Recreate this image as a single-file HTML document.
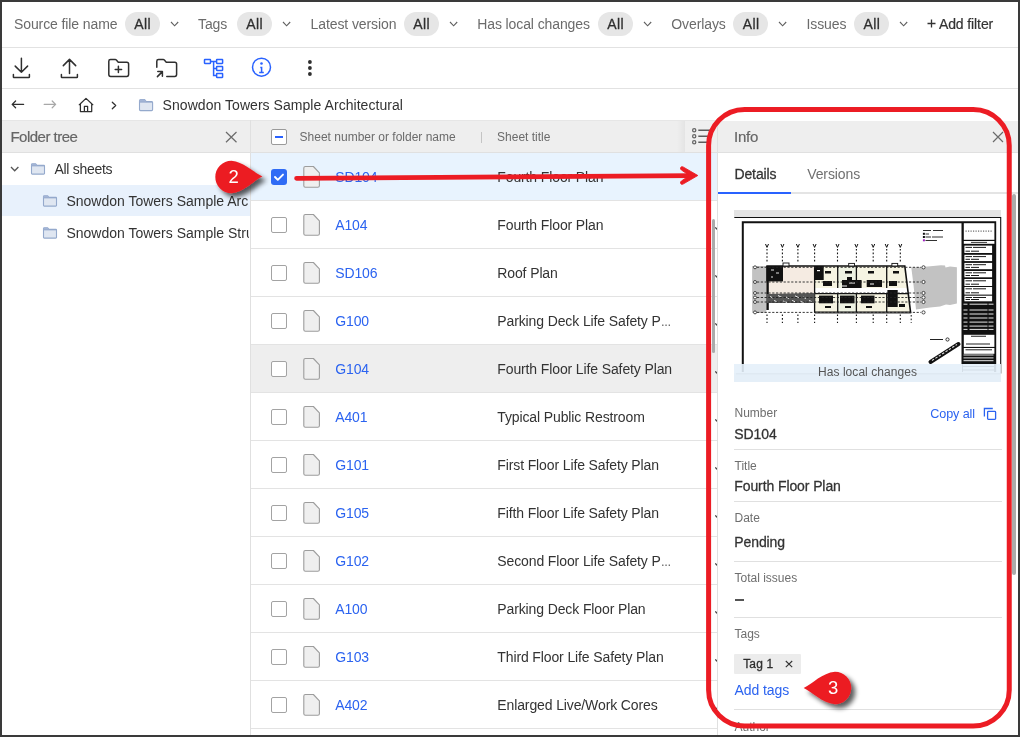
<!DOCTYPE html>
<html><head><meta charset="utf-8">
<style>
html,body{margin:0;padding:0;}
body{width:1020px;height:737px;position:relative;overflow:hidden;background:#fff;font-family:"Liberation Sans",sans-serif;}
#root{position:absolute;left:0;top:0;width:1020px;height:737px;will-change:transform;}
.a{position:absolute;white-space:nowrap;}
.b{position:absolute;}
.med{-webkit-text-stroke:0.28px currentColor;}
.med2{-webkit-text-stroke:0.2px currentColor;}
svg{position:absolute;overflow:visible;}
</style></head>
<body><div id="root">
<div class="a" style="left:14px;top:16.95px;font-size:14px;line-height:14px;color:#6b6b6b;letter-spacing:-0.1px;">Source file name</div>
<div class="b" style="left:125px;top:12px;width:35px;height:24px;border-radius:12px;background:#e6e6e6;"></div>
<div class="a med" style="left:134.3px;top:16.95px;font-size:14px;line-height:14px;color:#2e2e2e;letter-spacing:0.4px;">All</div>
<div class="a" style="left:198px;top:16.95px;font-size:14px;line-height:14px;color:#6b6b6b;letter-spacing:-0.1px;">Tags</div>
<div class="b" style="left:237px;top:12px;width:35px;height:24px;border-radius:12px;background:#e6e6e6;"></div>
<div class="a med" style="left:246.3px;top:16.95px;font-size:14px;line-height:14px;color:#2e2e2e;letter-spacing:0.4px;">All</div>
<div class="a" style="left:310.6px;top:16.95px;font-size:14px;line-height:14px;color:#6b6b6b;letter-spacing:-0.1px;">Latest version</div>
<div class="b" style="left:404px;top:12px;width:35px;height:24px;border-radius:12px;background:#e6e6e6;"></div>
<div class="a med" style="left:413.3px;top:16.95px;font-size:14px;line-height:14px;color:#2e2e2e;letter-spacing:0.4px;">All</div>
<div class="a" style="left:477.2px;top:16.95px;font-size:14px;line-height:14px;color:#6b6b6b;letter-spacing:-0.1px;">Has local changes</div>
<div class="b" style="left:598px;top:12px;width:35px;height:24px;border-radius:12px;background:#e6e6e6;"></div>
<div class="a med" style="left:607.3px;top:16.95px;font-size:14px;line-height:14px;color:#2e2e2e;letter-spacing:0.4px;">All</div>
<div class="a" style="left:671.3px;top:16.95px;font-size:14px;line-height:14px;color:#6b6b6b;letter-spacing:-0.1px;">Overlays</div>
<div class="b" style="left:733.4px;top:12px;width:35px;height:24px;border-radius:12px;background:#e6e6e6;"></div>
<div class="a med" style="left:742.6999999999999px;top:16.95px;font-size:14px;line-height:14px;color:#2e2e2e;letter-spacing:0.4px;">All</div>
<div class="a" style="left:806.5px;top:16.95px;font-size:14px;line-height:14px;color:#6b6b6b;letter-spacing:-0.1px;">Issues</div>
<div class="b" style="left:854.1px;top:12px;width:35px;height:24px;border-radius:12px;background:#e6e6e6;"></div>
<div class="a med" style="left:863.4px;top:16.95px;font-size:14px;line-height:14px;color:#2e2e2e;letter-spacing:0.4px;">All</div>
<svg style="left:0;top:0" width="1020" height="737"><path d="M171 22 L174.6 25.8 L178.2 22 M283 22 L286.6 25.8 L290.2 22 M450 22 L453.6 25.8 L457.2 22 M644 22 L647.6 25.8 L651.2 22 M779 22 L782.6 25.8 L786.2 22 M900 22 L903.6 25.8 L907.2 22" fill="none" stroke="#606060" stroke-width="1.1"/><path d="M927.5 23.5 H935.5 M931.5 19.5 V27.5" stroke="#333" stroke-width="1.3" fill="none"/></svg>
<div class="a med2" style="left:938.9px;top:16.95px;font-size:14px;line-height:14px;color:#333;letter-spacing:-0.1px;">Add filter</div>
<div class="b" style="left:0;top:47px;width:1020px;height:1px;background:#e2e2e2"></div>
<svg style="left:0;top:0" width="1020" height="737">
<g fill="none" stroke="#2f2f2f" stroke-width="1.5" stroke-linecap="round" stroke-linejoin="round">
<path d="M21.4 58.3 V72.2 M15.2 66.1 L21.4 72.2 L27.6 66.1 M13.4 74.6 V77 Q13.4 77.6 14 77.6 H28.8 Q29.4 77.6 29.4 77 V74.6"/>
<path d="M69.5 59.6 V73.4 M63.3 65.6 L69.5 59.4 L75.7 65.6 M61.4 74.6 V77 Q61.4 77.6 62 77.6 H76.8 Q77.4 77.6 77.4 77 V74.6"/>
<path d="M108.8 61.2 Q108.8 59.5 110.5 59.5 H115.2 Q115.9 59.5 116.4 60.1 L117.8 61.7 Q118.3 62.3 119 62.3 H126.8 Q128.6 62.3 128.6 64.1 V74.6 Q128.6 76.4 126.8 76.4 H110.6 Q108.8 76.4 108.8 74.6 Z"/>
<path d="M118.4 66.2 V72.6 M115.2 69.4 H121.6"/>
<path d="M156.8 67.2 V61.2 Q156.8 59.5 158.5 59.5 H163.2 Q163.9 59.5 164.4 60.1 L165.8 61.7 Q166.3 62.3 167 62.3 H174.8 Q176.6 62.3 176.6 64.1 V74.6 Q176.6 76.4 174.8 76.4 H166.8"/>
<path d="M157.4 76.6 L162.4 71.6 M157.8 71.6 H162.4 V76.2"/>
</g>
<g fill="none" stroke="#2962ff" stroke-width="1.5">
<rect x="204.5" y="59.6" width="6" height="3.9" rx="0.4"/>
<rect x="216.6" y="59.6" width="6" height="3.9" rx="0.4"/>
<rect x="216.6" y="66.5" width="6" height="3.9" rx="0.4"/>
<rect x="216.6" y="73.6" width="6" height="3.9" rx="0.4"/>
<path d="M210.5 61.5 H216.6 M213.6 61.5 V75.6 H216.6 M213.6 68.4 H216.6"/>
<circle cx="261.5" cy="67.2" r="9"/>
<path d="M260.3 67.6 H261.6 V72.4 M259.2 72.5 H263.8"/>
</g>
<circle cx="261.5" cy="63.5" r="1.3" fill="#2962ff"/>
<g fill="#2f2f2f"><circle cx="309.9" cy="62" r="1.9"/><circle cx="309.9" cy="68" r="1.9"/><circle cx="309.9" cy="74" r="1.9"/></g>
</svg>
<div class="b" style="left:0;top:88px;width:1020px;height:1px;background:#e2e2e2"></div>
<svg style="left:0;top:0" width="1020" height="737">
<g fill="none" stroke-width="1.25" stroke-linecap="round" stroke-linejoin="round">
<path d="M12.2 104.4 H23.6 M15.6 101 L12.2 104.4 L15.6 107.8" stroke="#2f2f2f"/>
<path d="M44.2 104.4 H55.6 M52.2 101 L55.6 104.4 L52.2 107.8" stroke="#a8a8a8"/>
<path d="M79.3 104.7 L86 98.4 L92.8 104.7 M80.4 103.7 V111.5 H91.7 V103.7 M84.4 111.5 V106.3 H87.6 V111.5" stroke="#2f2f2f"/>
<path d="M112.3 102.2 L115.7 105.5 L112.3 108.8" stroke="#2f2f2f"/>
</g>
<path d="M139.5 100.8 Q139.5 99.6 140.7 99.6 H144.6 L146.2 101.6 H151.6 Q152.6 101.6 152.6 102.6 V109.6 Q152.6 110.6 151.6 110.6 H140.5 Q139.5 110.6 139.5 109.6 Z" fill="#dfe6f1" stroke="#94a9cc" stroke-width="1.1"/><path d="M139.5 100.8 Q139.5 99.6 140.7 99.6 H144.6 L146.2 101.6 V102.3 H139.5 Z" fill="#a3b5d6"/><path d="M139.5 102.1 H152.6" stroke="#94a9cc" stroke-width="0.9"/>
</svg>
<div class="a" style="left:162.6px;top:97.65px;font-size:14px;line-height:14px;color:#333;letter-spacing:0.05px;">Snowdon Towers Sample Architectural</div>
<div class="b" style="left:0;top:120px;width:1020px;height:1px;background:#e6e6e6"></div>
<div class="b" style="left:0;top:121px;width:250px;height:31px;background:#eeeeee"></div>
<div class="b" style="left:0;top:152px;width:250px;height:1px;background:#e0e0e0"></div>
<div class="a med2" style="left:10.4px;top:129.10px;font-size:15px;line-height:15px;color:#666;letter-spacing:-0.5px;">Folder tree</div>
<svg style="left:0;top:0" width="1020" height="737"><path d="M226 132 L236.5 142.2 M236.5 132 L226 142.2" stroke="#6a6a6a" stroke-width="1.2" fill="none"/></svg>
<div class="b" style="left:0;top:185px;width:250px;height:31px;background:#e8f1fc"></div>
<svg style="left:0;top:0" width="1020" height="737"><path d="M11 167 L14.7 170.8 L18.4 167" fill="none" stroke="#555" stroke-width="1.3"/><path d="M31.5 164.5 Q31.5 163.7 32.3 163.7 H35.6 L37 165.39999999999998 H44 Q44.5 165.39999999999998 44.5 166.2 V173.6 Q44.5 174.1 43.7 174.1 H32.3 Q31.5 174.1 31.5 173.29999999999998 Z" fill="#dfe6f1" stroke="#94a9cc" stroke-width="1.1"/><path d="M31.5 164.5 Q31.5 163.7 32.3 163.7 H35.6 L37 165.39999999999998 V166.0 H31.5 Z" fill="#a3b5d6"/><path d="M31.5 165.89999999999998 H44.5" stroke="#94a9cc" stroke-width="0.9"/><path d="M43.5 196.5 Q43.5 195.7 44.3 195.7 H47.6 L49 197.39999999999998 H56 Q56.5 197.39999999999998 56.5 198.2 V205.6 Q56.5 206.1 55.7 206.1 H44.3 Q43.5 206.1 43.5 205.29999999999998 Z" fill="#dfe6f1" stroke="#94a9cc" stroke-width="1.1"/><path d="M43.5 196.5 Q43.5 195.7 44.3 195.7 H47.6 L49 197.39999999999998 V198.0 H43.5 Z" fill="#a3b5d6"/><path d="M43.5 197.89999999999998 H56.5" stroke="#94a9cc" stroke-width="0.9"/><path d="M43.5 228.5 Q43.5 227.7 44.3 227.7 H47.6 L49 229.39999999999998 H56 Q56.5 229.39999999999998 56.5 230.2 V237.6 Q56.5 238.1 55.7 238.1 H44.3 Q43.5 238.1 43.5 237.29999999999998 Z" fill="#dfe6f1" stroke="#94a9cc" stroke-width="1.1"/><path d="M43.5 228.5 Q43.5 227.7 44.3 227.7 H47.6 L49 229.39999999999998 V230.0 H43.5 Z" fill="#a3b5d6"/><path d="M43.5 229.89999999999998 H56.5" stroke="#94a9cc" stroke-width="0.9"/></svg>
<div class="a" style="left:54.5px;top:162.05px;font-size:14px;line-height:14px;color:#333;letter-spacing:-0.3px;">All sheets</div>
<div class="b" style="left:66.4px;top:190px;width:183px;height:24px;overflow:hidden"><div class="a" style="left:0px;top:4.05px;font-size:14px;line-height:14px;color:#333;">Snowdon Towers Sample Architectural</div></div>
<div class="b" style="left:66.4px;top:222px;width:183px;height:24px;overflow:hidden"><div class="a" style="left:0px;top:4.05px;font-size:14px;line-height:14px;color:#333;">Snowdon Towers Sample Structural</div></div>
<div class="b" style="left:250px;top:120px;width:1px;height:617px;background:#e0e0e0"></div>
<div class="b" style="left:251px;top:121px;width:466px;height:31px;background:#eeeeee"></div>
<div class="b" style="left:251px;top:152px;width:466px;height:1px;background:#e0e0e0"></div>
<div class="b" style="left:677px;top:121px;width:8px;height:31px;background:linear-gradient(to right,rgba(0,0,0,0),rgba(0,0,0,0.045))"></div>
<div class="b" style="left:685px;top:121px;width:32px;height:31px;background:#efefef"></div>
<div class="b" style="left:271.2px;top:129.2px;width:13.6px;height:13.6px;border:1.2px solid #9a9a9a;border-radius:2px;background:#fff"></div>
<div class="b" style="left:275px;top:136px;width:8px;height:2px;background:#2962ff"></div>
<div class="a" style="left:299.6px;top:130.94px;font-size:12px;line-height:12px;color:#6b6b6b;">Sheet number or folder name</div>
<div class="b" style="left:480.5px;top:131.5px;width:1px;height:11px;background:#c4c4c4"></div>
<div class="a" style="left:497.1px;top:130.94px;font-size:12px;line-height:12px;color:#6b6b6b;">Sheet title</div>
<svg style="left:0;top:0" width="1020" height="737"><g fill="none" stroke="#666" stroke-width="1.3"><circle cx="694.2" cy="130.3" r="1.6"/><circle cx="694.2" cy="136.3" r="1.6"/><circle cx="694.2" cy="142.3" r="1.6"/><path d="M698.3 130.3 H711 M698.3 136.3 H711 M698.3 142.3 H711" stroke="#5c5c5c" stroke-width="1.4"/></g></svg>
<div class="b" style="left:251px;top:153px;width:466px;height:47px;background:#e8f3fe"></div>
<div class="b" style="left:251px;top:200px;width:466px;height:1px;background:#e3e3e3"></div>
<div class="b" style="left:271.2px;top:169.2px;width:15.6px;height:15.6px;border-radius:3px;background:#2f6bf5"></div>
<svg style="left:0;top:0" width="1020" height="737"><path d="M275 177 L277.8 179.8 L283 174.6" fill="none" stroke="#fff" stroke-width="1.9" stroke-linecap="round" stroke-linejoin="round"/></svg>
<svg style="left:0;top:0" width="1020" height="737"><path d="M303.8 168.1 Q303.8 166.5 305.4 166.5 H313.4 L319.4 172.9 V185.7 Q319.4 187.3 317.8 187.3 H305.4 Q303.8 187.3 303.8 185.7 Z" fill="#efefef" stroke="#9d9d9d" stroke-width="1.1" stroke-linejoin="round"/></svg>
<div class="a" style="left:335.3px;top:170.15px;font-size:14px;line-height:14px;color:#2b63f0;letter-spacing:-0.15px;">SD104</div>
<div class="a" style="left:497.3px;top:170.15px;font-size:14px;line-height:14px;color:#333;letter-spacing:-0.12px;">Fourth Floor Plan</div>
<div class="b" style="left:251px;top:248px;width:466px;height:1px;background:#e3e3e3"></div>
<div class="b" style="left:271.2px;top:217.2px;width:13.6px;height:13.6px;border:1.2px solid #a3a3a3;border-radius:2px;background:#fff"></div>
<svg style="left:0;top:0" width="1020" height="737"><path d="M303.8 216.1 Q303.8 214.5 305.4 214.5 H313.4 L319.4 220.9 V233.7 Q319.4 235.3 317.8 235.3 H305.4 Q303.8 235.3 303.8 233.7 Z" fill="#efefef" stroke="#9d9d9d" stroke-width="1.1" stroke-linejoin="round"/></svg>
<div class="a" style="left:335.3px;top:218.15px;font-size:14px;line-height:14px;color:#2b63f0;letter-spacing:-0.15px;">A104</div>
<div class="a" style="left:497.3px;top:218.15px;font-size:14px;line-height:14px;color:#333;letter-spacing:-0.12px;">Fourth Floor Plan</div>
<svg style="left:0;top:0" width="1020" height="737"><path d="M715.4 227.3 L716.9 229.3" stroke="#333" stroke-width="1.2" fill="none"/></svg>
<div class="b" style="left:251px;top:296px;width:466px;height:1px;background:#e3e3e3"></div>
<div class="b" style="left:271.2px;top:265.2px;width:13.6px;height:13.6px;border:1.2px solid #a3a3a3;border-radius:2px;background:#fff"></div>
<svg style="left:0;top:0" width="1020" height="737"><path d="M303.8 264.1 Q303.8 262.5 305.4 262.5 H313.4 L319.4 268.9 V281.7 Q319.4 283.3 317.8 283.3 H305.4 Q303.8 283.3 303.8 281.7 Z" fill="#efefef" stroke="#9d9d9d" stroke-width="1.1" stroke-linejoin="round"/></svg>
<div class="a" style="left:335.3px;top:266.15px;font-size:14px;line-height:14px;color:#2b63f0;letter-spacing:-0.15px;">SD106</div>
<div class="a" style="left:497.3px;top:266.15px;font-size:14px;line-height:14px;color:#333;letter-spacing:-0.12px;">Roof Plan</div>
<svg style="left:0;top:0" width="1020" height="737"><path d="M715.4 275.3 L716.9 277.3" stroke="#333" stroke-width="1.2" fill="none"/></svg>
<div class="b" style="left:251px;top:344px;width:466px;height:1px;background:#e3e3e3"></div>
<div class="b" style="left:271.2px;top:313.2px;width:13.6px;height:13.6px;border:1.2px solid #a3a3a3;border-radius:2px;background:#fff"></div>
<svg style="left:0;top:0" width="1020" height="737"><path d="M303.8 312.1 Q303.8 310.5 305.4 310.5 H313.4 L319.4 316.9 V329.7 Q319.4 331.3 317.8 331.3 H305.4 Q303.8 331.3 303.8 329.7 Z" fill="#efefef" stroke="#9d9d9d" stroke-width="1.1" stroke-linejoin="round"/></svg>
<div class="a" style="left:335.3px;top:314.15px;font-size:14px;line-height:14px;color:#2b63f0;letter-spacing:-0.15px;">G100</div>
<div class="a" style="left:497.3px;top:314.15px;font-size:14px;line-height:14px;color:#333;letter-spacing:-0.12px;">Parking Deck Life Safety P<span style='display:inline-block;transform:scaleX(0.72);transform-origin:0 50%'>…</span></div>
<svg style="left:0;top:0" width="1020" height="737"><path d="M715.4 323.3 L716.9 325.3" stroke="#333" stroke-width="1.2" fill="none"/></svg>
<div class="b" style="left:251px;top:345px;width:466px;height:47px;background:#eeeeee"></div>
<div class="b" style="left:251px;top:392px;width:466px;height:1px;background:#e3e3e3"></div>
<div class="b" style="left:271.2px;top:361.2px;width:13.6px;height:13.6px;border:1.2px solid #a3a3a3;border-radius:2px;background:#fff"></div>
<svg style="left:0;top:0" width="1020" height="737"><path d="M303.8 360.1 Q303.8 358.5 305.4 358.5 H313.4 L319.4 364.9 V377.7 Q319.4 379.3 317.8 379.3 H305.4 Q303.8 379.3 303.8 377.7 Z" fill="#efefef" stroke="#9d9d9d" stroke-width="1.1" stroke-linejoin="round"/></svg>
<div class="a" style="left:335.3px;top:362.15px;font-size:14px;line-height:14px;color:#2b63f0;letter-spacing:-0.15px;">G104</div>
<div class="a" style="left:497.3px;top:362.15px;font-size:14px;line-height:14px;color:#333;letter-spacing:-0.12px;">Fourth Floor Life Safety Plan</div>
<svg style="left:0;top:0" width="1020" height="737"><path d="M715.4 371.3 L716.9 373.3" stroke="#333" stroke-width="1.2" fill="none"/></svg>
<div class="b" style="left:251px;top:440px;width:466px;height:1px;background:#e3e3e3"></div>
<div class="b" style="left:271.2px;top:409.2px;width:13.6px;height:13.6px;border:1.2px solid #a3a3a3;border-radius:2px;background:#fff"></div>
<svg style="left:0;top:0" width="1020" height="737"><path d="M303.8 408.1 Q303.8 406.5 305.4 406.5 H313.4 L319.4 412.9 V425.7 Q319.4 427.3 317.8 427.3 H305.4 Q303.8 427.3 303.8 425.7 Z" fill="#efefef" stroke="#9d9d9d" stroke-width="1.1" stroke-linejoin="round"/></svg>
<div class="a" style="left:335.3px;top:410.15px;font-size:14px;line-height:14px;color:#2b63f0;letter-spacing:-0.15px;">A401</div>
<div class="a" style="left:497.3px;top:410.15px;font-size:14px;line-height:14px;color:#333;letter-spacing:-0.12px;">Typical Public Restroom</div>
<svg style="left:0;top:0" width="1020" height="737"><path d="M715.4 419.3 L716.9 421.3" stroke="#333" stroke-width="1.2" fill="none"/></svg>
<div class="b" style="left:251px;top:488px;width:466px;height:1px;background:#e3e3e3"></div>
<div class="b" style="left:271.2px;top:457.2px;width:13.6px;height:13.6px;border:1.2px solid #a3a3a3;border-radius:2px;background:#fff"></div>
<svg style="left:0;top:0" width="1020" height="737"><path d="M303.8 456.1 Q303.8 454.5 305.4 454.5 H313.4 L319.4 460.9 V473.7 Q319.4 475.3 317.8 475.3 H305.4 Q303.8 475.3 303.8 473.7 Z" fill="#efefef" stroke="#9d9d9d" stroke-width="1.1" stroke-linejoin="round"/></svg>
<div class="a" style="left:335.3px;top:458.15px;font-size:14px;line-height:14px;color:#2b63f0;letter-spacing:-0.15px;">G101</div>
<div class="a" style="left:497.3px;top:458.15px;font-size:14px;line-height:14px;color:#333;letter-spacing:-0.12px;">First Floor Life Safety Plan</div>
<svg style="left:0;top:0" width="1020" height="737"><path d="M715.4 467.3 L716.9 469.3" stroke="#333" stroke-width="1.2" fill="none"/></svg>
<div class="b" style="left:251px;top:536px;width:466px;height:1px;background:#e3e3e3"></div>
<div class="b" style="left:271.2px;top:505.2px;width:13.6px;height:13.6px;border:1.2px solid #a3a3a3;border-radius:2px;background:#fff"></div>
<svg style="left:0;top:0" width="1020" height="737"><path d="M303.8 504.1 Q303.8 502.5 305.4 502.5 H313.4 L319.4 508.9 V521.7 Q319.4 523.3 317.8 523.3 H305.4 Q303.8 523.3 303.8 521.7 Z" fill="#efefef" stroke="#9d9d9d" stroke-width="1.1" stroke-linejoin="round"/></svg>
<div class="a" style="left:335.3px;top:506.15px;font-size:14px;line-height:14px;color:#2b63f0;letter-spacing:-0.15px;">G105</div>
<div class="a" style="left:497.3px;top:506.15px;font-size:14px;line-height:14px;color:#333;letter-spacing:-0.12px;">Fifth Floor Life Safety Plan</div>
<svg style="left:0;top:0" width="1020" height="737"><path d="M715.4 515.3 L716.9 517.3" stroke="#333" stroke-width="1.2" fill="none"/></svg>
<div class="b" style="left:251px;top:584px;width:466px;height:1px;background:#e3e3e3"></div>
<div class="b" style="left:271.2px;top:553.2px;width:13.6px;height:13.6px;border:1.2px solid #a3a3a3;border-radius:2px;background:#fff"></div>
<svg style="left:0;top:0" width="1020" height="737"><path d="M303.8 552.1 Q303.8 550.5 305.4 550.5 H313.4 L319.4 556.9 V569.7 Q319.4 571.3 317.8 571.3 H305.4 Q303.8 571.3 303.8 569.7 Z" fill="#efefef" stroke="#9d9d9d" stroke-width="1.1" stroke-linejoin="round"/></svg>
<div class="a" style="left:335.3px;top:554.15px;font-size:14px;line-height:14px;color:#2b63f0;letter-spacing:-0.15px;">G102</div>
<div class="a" style="left:497.3px;top:554.15px;font-size:14px;line-height:14px;color:#333;letter-spacing:-0.12px;">Second Floor Life Safety P<span style='display:inline-block;transform:scaleX(0.72);transform-origin:0 50%'>…</span></div>
<svg style="left:0;top:0" width="1020" height="737"><path d="M715.4 563.3 L716.9 565.3" stroke="#333" stroke-width="1.2" fill="none"/></svg>
<div class="b" style="left:251px;top:632px;width:466px;height:1px;background:#e3e3e3"></div>
<div class="b" style="left:271.2px;top:601.2px;width:13.6px;height:13.6px;border:1.2px solid #a3a3a3;border-radius:2px;background:#fff"></div>
<svg style="left:0;top:0" width="1020" height="737"><path d="M303.8 600.1 Q303.8 598.5 305.4 598.5 H313.4 L319.4 604.9 V617.7 Q319.4 619.3 317.8 619.3 H305.4 Q303.8 619.3 303.8 617.7 Z" fill="#efefef" stroke="#9d9d9d" stroke-width="1.1" stroke-linejoin="round"/></svg>
<div class="a" style="left:335.3px;top:602.15px;font-size:14px;line-height:14px;color:#2b63f0;letter-spacing:-0.15px;">A100</div>
<div class="a" style="left:497.3px;top:602.15px;font-size:14px;line-height:14px;color:#333;letter-spacing:-0.12px;">Parking Deck Floor Plan</div>
<svg style="left:0;top:0" width="1020" height="737"><path d="M715.4 611.3 L716.9 613.3" stroke="#333" stroke-width="1.2" fill="none"/></svg>
<div class="b" style="left:251px;top:680px;width:466px;height:1px;background:#e3e3e3"></div>
<div class="b" style="left:271.2px;top:649.2px;width:13.6px;height:13.6px;border:1.2px solid #a3a3a3;border-radius:2px;background:#fff"></div>
<svg style="left:0;top:0" width="1020" height="737"><path d="M303.8 648.1 Q303.8 646.5 305.4 646.5 H313.4 L319.4 652.9 V665.7 Q319.4 667.3 317.8 667.3 H305.4 Q303.8 667.3 303.8 665.7 Z" fill="#efefef" stroke="#9d9d9d" stroke-width="1.1" stroke-linejoin="round"/></svg>
<div class="a" style="left:335.3px;top:650.15px;font-size:14px;line-height:14px;color:#2b63f0;letter-spacing:-0.15px;">G103</div>
<div class="a" style="left:497.3px;top:650.15px;font-size:14px;line-height:14px;color:#333;letter-spacing:-0.12px;">Third Floor Life Safety Plan</div>
<svg style="left:0;top:0" width="1020" height="737"><path d="M715.4 659.3 L716.9 661.3" stroke="#333" stroke-width="1.2" fill="none"/></svg>
<div class="b" style="left:251px;top:728px;width:466px;height:1px;background:#e3e3e3"></div>
<div class="b" style="left:271.2px;top:697.2px;width:13.6px;height:13.6px;border:1.2px solid #a3a3a3;border-radius:2px;background:#fff"></div>
<svg style="left:0;top:0" width="1020" height="737"><path d="M303.8 696.1 Q303.8 694.5 305.4 694.5 H313.4 L319.4 700.9 V713.7 Q319.4 715.3 317.8 715.3 H305.4 Q303.8 715.3 303.8 713.7 Z" fill="#efefef" stroke="#9d9d9d" stroke-width="1.1" stroke-linejoin="round"/></svg>
<div class="a" style="left:335.3px;top:698.15px;font-size:14px;line-height:14px;color:#2b63f0;letter-spacing:-0.15px;">A402</div>
<div class="a" style="left:497.3px;top:698.15px;font-size:14px;line-height:14px;color:#333;letter-spacing:-0.12px;">Enlarged Live/Work Cores</div>
<svg style="left:0;top:0" width="1020" height="737"><path d="M715.4 707.3 L716.9 709.3" stroke="#333" stroke-width="1.2" fill="none"/></svg>
<div class="b" style="left:711.5px;top:218.5px;width:3.5px;height:134px;background:#ababab;border-radius:2px"></div>
<div class="b" style="left:717px;top:120px;width:303px;height:617px;background:#fff"></div>
<div class="b" style="left:717px;top:120px;width:1px;height:617px;background:#e0e0e0"></div>
<div class="b" style="left:718px;top:121px;width:302px;height:31px;background:#eeeeee"></div>
<div class="b" style="left:718px;top:152px;width:302px;height:1px;background:#e0e0e0"></div>
<div class="a med2" style="left:734px;top:129.30px;font-size:15px;line-height:15px;color:#666;letter-spacing:-0.2px;">Info</div>
<svg style="left:0;top:0" width="1020" height="737"><path d="M993 132 L1003 142 M1003 132 L993 142" stroke="#6a6a6a" stroke-width="1.2" fill="none"/></svg>
<div class="a med" style="left:734.4px;top:167.25px;font-size:14px;line-height:14px;color:#333;letter-spacing:-0.1px;">Details</div>
<div class="a" style="left:807.2px;top:167.25px;font-size:14px;line-height:14px;color:#707070;letter-spacing:-0.1px;">Versions</div>
<div class="b" style="left:718px;top:192px;width:300px;height:2px;background:#e4e4e4"></div>
<div class="b" style="left:718px;top:192px;width:73px;height:2px;background:#2962ff"></div>
<div class="b" style="left:1012.3px;top:194px;width:3.7px;height:381px;background:#ababab;border-radius:2px"></div>
<div class="b" style="left:734px;top:210px;width:267px;height:172px;background:#e4e4e4"></div>
<div class="b" style="left:735px;top:216px;width:265px;height:154px;background:#fff;border:1px solid #111;box-sizing:border-box"></div>
<svg style="left:0;top:0" width="1020" height="737"><rect x="734" y="210" width="267" height="7" fill="#e4e4e4"/><rect x="734" y="217" width="267" height="156" fill="#fff"/><path d="M734.3 217.5 H1000.7 V373.5" stroke="#111" stroke-width="1.1" fill="none"/><path d="M736 373.8 H1000" stroke="#999" stroke-width="1" fill="none"/><path d="M742.8 372 V222.2 H995.2 V372" stroke="#111" stroke-width="2" fill="none"/><rect x="961.5" y="222" width="34.5" height="142" fill="#111"/><path d="M962.5 364 V372 M995.2 364 V372 M963 366.5 H994 M963 370 H994" stroke="#333" stroke-width="1"/><rect x="963.8" y="223.2" width="30.6" height="16.6" fill="#fff"/><path d="M965.5 231.1 H993" stroke="#333" stroke-width="0.9" stroke-dasharray="1.2 1.3"/><rect x="963.8" y="241" width="30.6" height="2.8" fill="#fff"/><path d="M971 242.4 H987" stroke="#222" stroke-width="0.9"/><rect x="964.4" y="245.6" width="27.7" height="7.400000000000006" fill="#fff"/><path d="M965.5 247.4 H972 M973 247.4 H986 M965.5 251.2 H970 M971 251.2 H979" stroke="#1a1a1a" stroke-width="1"/><rect x="964.4" y="254.8" width="27.7" height="6.300000000000011" fill="#fff"/><path d="M965.5 256.6 H972 M973 256.6 H986 M965.5 259.3 H970 M971 259.3 H979" stroke="#1a1a1a" stroke-width="1"/><rect x="964.4" y="262.9" width="27.7" height="6.300000000000011" fill="#fff"/><path d="M965.5 264.7 H972 M973 264.7 H986 M965.5 267.4 H970 M971 267.4 H979" stroke="#1a1a1a" stroke-width="1"/><rect x="964.4" y="271" width="27.7" height="6.300000000000011" fill="#fff"/><path d="M965.5 272.8 H972 M973 272.8 H986 M965.5 275.5 H970 M971 275.5 H979" stroke="#1a1a1a" stroke-width="1"/><rect x="964.4" y="279" width="27.7" height="7" fill="#fff"/><path d="M965.5 280.8 H972 M973 280.8 H986 M965.5 284.2 H970 M971 284.2 H979" stroke="#1a1a1a" stroke-width="1"/><rect x="964.4" y="287" width="27.7" height="7.600000000000023" fill="#fff"/><path d="M965.5 288.8 H972 M973 288.8 H986 M965.5 292.8 H970 M971 292.8 H979" stroke="#1a1a1a" stroke-width="1"/><rect x="964.4" y="295.7" width="27.7" height="5.600000000000023" fill="#fff"/><path d="M965.5 297.5 H972 M973 297.5 H986 M965.5 299.5 H970 M971 299.5 H979" stroke="#1a1a1a" stroke-width="1"/><path d="M963.5 304.2 H967.5 M969.5 304.2 H987.5 M988.5 304.2 H993.5" stroke="#fff" stroke-width="0.9"/><path d="M963.5 310 H967.5 M969.5 310 H987.5 M988.5 310 H993.5" stroke="#fff" stroke-width="0.9"/><path d="M963.5 314 H967.5 M969.5 314 H987.5 M988.5 314 H993.5" stroke="#fff" stroke-width="0.9"/><path d="M963.5 318 H967.5 M969.5 318 H987.5 M988.5 318 H993.5" stroke="#fff" stroke-width="0.9"/><path d="M963.5 322.1 H967.5 M969.5 322.1 H987.5 M988.5 322.1 H993.5" stroke="#fff" stroke-width="0.9"/><path d="M963.5 326.1 H967.5 M969.5 326.1 H987.5 M988.5 326.1 H993.5" stroke="#fff" stroke-width="0.9"/><path d="M963.5 329.4 H967.5 M969.5 329.4 H987.5 M988.5 329.4 H993.5" stroke="#fff" stroke-width="0.9"/><rect x="963.8" y="334.8" width="30.6" height="12.1" fill="#fff"/><path d="M971 336.2 H986 M966 344 H990" stroke="#222" stroke-width="1.1"/><rect x="963.8" y="348" width="30.6" height="5.8" fill="#fff"/><path d="M965.5 349.8 H992" stroke="#222" stroke-width="1"/><path d="M963.5 355 H993.5" stroke="#fff" stroke-width="0.9"/><path d="M963.5 357.9 H993.5" stroke="#fff" stroke-width="0.9"/><path d="M963.5 360.7 H993.5" stroke="#fff" stroke-width="0.9"/><g stroke="#1a1a1a" stroke-width="0.9"><path d="M923 230.5 H931 M933 230.5 H943 M925.5 234 H929 M925.5 237 H931 M932 237 H943 M925.5 240.5 H937"/></g><rect x="922.9" y="232.8" width="2" height="2" fill="#111"/><rect x="922.9" y="236" width="2" height="2" fill="#111"/><rect x="922.9" y="239.3" width="2" height="2" fill="#a020c0"/><path d="M752.1 266 H766.3 V313 H752.1 Z" fill="#c2c2c2"/><path d="M911.3 267.5 L925 266.8 L941 265.2 L945 265.6 L945.5 267.6 L950 266.6 L956.9 267.2 V303.5 L950 305 L946 304.6 L940 306.5 L930 307.6 L916 309.5 L913.5 285 Z" fill="#c2c2c2"/><path d="M766.3 266 H814.6 V294.3 H766.3 Z" fill="#f5ebe2"/><path d="M814.6 266 H904.8 L910.6 312.4 H814.6 Z" fill="#f6f4e2"/><path d="M837.7 267 H856.4 V312 H837.7 Z" fill="#eef2e2"/><rect x="814.6" y="288" width="94" height="5.7" fill="#fff"/><path d="M766.3 266 H904.8 L910.6 312.4 H814.6" stroke="#111" stroke-width="1.6" fill="none"/><path d="M767.6 266 V310" stroke="#111" stroke-width="2.4"/><path d="M814.6 266 V312.4 M837.7 266 V288 M856.4 266 V288 M886.7 266 V288 M837.7 293.7 V312.4 M856.4 293.7 V312.4 M886.7 293.7 V312.4 M815 293.7 H908" stroke="#111" stroke-width="1.3"/><path d="M766.3 266 H783 V281.4 H766.3 Z" fill="#111"/><path d="M771 270 h3 M776 273 h3 M771 277 h2" stroke="#fff" stroke-width="0.9"/><rect x="814.6" y="266" width="9.1" height="14" fill="#111"/><rect x="817" y="270" width="3" height="1.2" fill="#fff"/><path d="M767 294 L814.6 293 L814.6 303 L767 303 Z" fill="#555"/><path d="M770 296.5 l3 1.5 M778 295.5 l4 2 M786 297 l3 1.5 M795 295.8 l4 2 M803 297 l3 1.5 M774 300.5 l3 1.2 M783 301 l4 1.5 M792 300.5 l3 1.2 M800 301.2 l4 1.5 M809 300.5 l3 1.2" stroke="#fff" stroke-width="0.9"/><rect x="825" y="271" width="6" height="2.5" fill="#111"/><rect x="845" y="271" width="7" height="2.5" fill="#111"/><rect x="868" y="271" width="6" height="2.5" fill="#111"/><rect x="893" y="271" width="6" height="2.5" fill="#111"/><rect x="842" y="280" width="19.6" height="8" fill="#111"/><rect x="866.7" y="280" width="15.3" height="7" fill="#111"/><rect x="823" y="281" width="9" height="5" fill="#111"/><rect x="889" y="281" width="8" height="5" fill="#111"/><rect x="819" y="295.6" width="14" height="7.7" fill="#111"/><rect x="840" y="295.6" width="14.5" height="7.7" fill="#111"/><rect x="861" y="295.6" width="13.5" height="7.7" fill="#111"/><rect x="887.4" y="290" width="10.3" height="17" fill="#111"/><rect x="825" y="306" width="6" height="2" fill="#111"/><rect x="845" y="306" width="6" height="2" fill="#111"/><rect x="866" y="306" width="6" height="2" fill="#111"/><rect x="899" y="304" width="6" height="3" fill="#111"/><rect x="847" y="277" width="5" height="4" fill="#111"/><path d="M842 286 h5 M849 283 h6 M870 284 h4" stroke="#fff" stroke-width="1"/><path d="M910.6 312.4 H815 V314 H911 Z" fill="#999"/><g fill="#fff" stroke="#111" stroke-width="0.9"><rect x="783" y="263" width="6" height="3"/><rect x="848.7" y="263.4" width="5.8" height="2.6"/><rect x="891.9" y="263.4" width="5.8" height="2.6"/></g><path d="M767 249 V263 M767 314.5 V323" stroke="#111" stroke-width="1.1" stroke-dasharray="1.6 2"/><path d="M765.5 244 L767 247.4 L768.5 244" stroke="#111" stroke-width="1" fill="none"/><path d="M782.4 249 V263 M782.4 314.5 V323" stroke="#111" stroke-width="1.1" stroke-dasharray="1.6 2"/><path d="M780.9 244 L782.4 247.4 L783.9 244" stroke="#111" stroke-width="1" fill="none"/><path d="M797.9 249 V263 M797.9 314.5 V323" stroke="#111" stroke-width="1.1" stroke-dasharray="1.6 2"/><path d="M796.4 244 L797.9 247.4 L799.4 244" stroke="#111" stroke-width="1" fill="none"/><path d="M814.6 249 V263 M814.6 314.5 V323" stroke="#111" stroke-width="1.1" stroke-dasharray="1.6 2"/><path d="M813.1 244 L814.6 247.4 L816.1 244" stroke="#111" stroke-width="1" fill="none"/><path d="M837.5 249 V263 M837.5 314.5 V323" stroke="#111" stroke-width="1.1" stroke-dasharray="1.6 2"/><path d="M836.0 244 L837.5 247.4 L839.0 244" stroke="#111" stroke-width="1" fill="none"/><path d="M856.4 249 V263 M856.4 314.5 V323" stroke="#111" stroke-width="1.1" stroke-dasharray="1.6 2"/><path d="M854.9 244 L856.4 247.4 L857.9 244" stroke="#111" stroke-width="1" fill="none"/><path d="M873.2 249 V263 M873.2 314.5 V323" stroke="#111" stroke-width="1.1" stroke-dasharray="1.6 2"/><path d="M871.7 244 L873.2 247.4 L874.7 244" stroke="#111" stroke-width="1" fill="none"/><path d="M886.7 249 V263 M886.7 314.5 V323" stroke="#111" stroke-width="1.1" stroke-dasharray="1.6 2"/><path d="M885.2 244 L886.7 247.4 L888.2 244" stroke="#111" stroke-width="1" fill="none"/><path d="M900.3 249 V263 M900.3 314.5 V323" stroke="#111" stroke-width="1.1" stroke-dasharray="1.6 2"/><path d="M898.8 244 L900.3 247.4 L901.8 244" stroke="#111" stroke-width="1" fill="none"/><path d="M911.2 315 V323" stroke="#111" stroke-width="1" stroke-dasharray="1.6 2"/><path d="M757 267.3 H921" stroke="#222" stroke-width="0.9" stroke-dasharray="2.2 1.6"/><circle cx="755" cy="267.3" r="1.5" fill="#fff" stroke="#222" stroke-width="0.8"/><circle cx="923.5" cy="267.3" r="1.6" fill="#fff" stroke="#222" stroke-width="0.8"/><path d="M757 282 H921" stroke="#222" stroke-width="0.9" stroke-dasharray="2.2 1.6"/><circle cx="755" cy="282" r="1.5" fill="#fff" stroke="#222" stroke-width="0.8"/><circle cx="923.5" cy="282" r="1.6" fill="#fff" stroke="#222" stroke-width="0.8"/><path d="M757 293 H921" stroke="#222" stroke-width="0.9" stroke-dasharray="2.2 1.6"/><circle cx="755" cy="293" r="1.5" fill="#fff" stroke="#222" stroke-width="0.8"/><circle cx="923.5" cy="293" r="1.6" fill="#fff" stroke="#222" stroke-width="0.8"/><path d="M757 297.5 H921" stroke="#222" stroke-width="0.9" stroke-dasharray="2.2 1.6"/><circle cx="755" cy="297.5" r="1.5" fill="#fff" stroke="#222" stroke-width="0.8"/><circle cx="923.5" cy="297.5" r="1.6" fill="#fff" stroke="#222" stroke-width="0.8"/><path d="M757 302 H921" stroke="#222" stroke-width="0.9" stroke-dasharray="2.2 1.6"/><circle cx="755" cy="302" r="1.5" fill="#fff" stroke="#222" stroke-width="0.8"/><circle cx="923.5" cy="302" r="1.6" fill="#fff" stroke="#222" stroke-width="0.8"/><path d="M757 312.4 H921" stroke="#222" stroke-width="0.9" stroke-dasharray="2.2 1.6"/><circle cx="755" cy="312.4" r="1.5" fill="#fff" stroke="#222" stroke-width="0.8"/><circle cx="923.5" cy="312.4" r="1.6" fill="#fff" stroke="#222" stroke-width="0.8"/><path d="M930.5 362 L958.5 344" stroke="#111" stroke-width="4" stroke-linecap="round"/><path d="M932 360.5 L957 344.5" stroke="#ddd" stroke-width="1.1" stroke-dasharray="2.5 1.5"/><path d="M930 339.5 H943" stroke="#222" stroke-width="1"/><circle cx="947.5" cy="339.5" r="1.6" fill="none" stroke="#222" stroke-width="0.9"/></svg>
<div class="b" style="left:734px;top:363.5px;width:267px;height:18.5px;background:rgba(228,239,250,0.9)"></div>
<div class="a" style="left:734px;top:366.3px;width:267px;text-align:center;font-size:12px;line-height:12px;color:#555;letter-spacing:0.05px">Has local changes</div>
<div class="a" style="left:734.5px;top:406.84px;font-size:12px;line-height:12px;color:#6e6e6e;">Number</div>
<div class="a med" style="left:734.3px;top:427.15px;font-size:14px;line-height:14px;color:#333;letter-spacing:-0.1px;">SD104</div>
<div class="b" style="left:734px;top:449px;width:268px;height:1px;background:#e0e0e0"></div>
<div class="a" style="left:930.3px;top:407.83px;font-size:12.6px;line-height:12.6px;color:#2b63f0;letter-spacing:-0.1px;">Copy all</div>
<svg style="left:0;top:0" width="1020" height="737"><g fill="none" stroke="#2b63f0" stroke-width="1.3"><path d="M984.4 416.6 V408.5 H992.8"/><rect x="987.6" y="411.4" width="8" height="8" rx="0.8"/></g></svg>
<div class="a" style="left:734.5px;top:460.24px;font-size:12px;line-height:12px;color:#6e6e6e;">Title</div>
<div class="a med" style="left:734.3px;top:478.65px;font-size:14px;line-height:14px;color:#333;letter-spacing:-0.1px;">Fourth Floor Plan</div>
<div class="b" style="left:734px;top:501px;width:268px;height:1px;background:#e0e0e0"></div>
<div class="a" style="left:734.5px;top:512.34px;font-size:12px;line-height:12px;color:#6e6e6e;">Date</div>
<div class="a med" style="left:734.3px;top:535.35px;font-size:14px;line-height:14px;color:#333;letter-spacing:-0.1px;">Pending</div>
<div class="b" style="left:734px;top:561px;width:268px;height:1px;background:#e0e0e0"></div>
<div class="a" style="left:734.5px;top:571.64px;font-size:12px;line-height:12px;color:#6e6e6e;">Total issues</div>
<div class="b" style="left:734px;top:617px;width:268px;height:1px;background:#e0e0e0"></div>
<div class="b" style="left:735px;top:599px;width:9.2px;height:1.5px;background:#555"></div>
<div class="a" style="left:734.5px;top:627.54px;font-size:12px;line-height:12px;color:#6e6e6e;">Tags</div>
<div class="b" style="left:734px;top:654.2px;width:67px;height:19.6px;background:#ececec;border-radius:1px"></div>
<div class="a med" style="left:743.2px;top:657.84px;font-size:12px;line-height:12px;color:#2e2e2e;letter-spacing:0.15px;">Tag 1</div>
<svg style="left:0;top:0" width="1020" height="737"><path d="M785.8 661 L792.2 667.2 M792.2 661 L785.8 667.2" stroke="#333" stroke-width="1.1" fill="none"/></svg>
<div class="a" style="left:734.6px;top:682.95px;font-size:14px;line-height:14px;color:#2b63f0;letter-spacing:-0.1px;">Add tags</div>
<div class="b" style="left:734px;top:709px;width:268px;height:1px;background:#e0e0e0"></div>
<div class="a" style="left:734.5px;top:720.84px;font-size:12px;line-height:12px;color:#6e6e6e;">Author</div>
<svg style="left:0;top:0" width="1020" height="737">
<defs><filter id="sh" x="-50%" y="-50%" width="200%" height="200%"><feGaussianBlur in="SourceAlpha" stdDeviation="2.6"/><feOffset dx="3.5" dy="3.5"/><feComponentTransfer><feFuncA type="linear" slope="0.65"/></feComponentTransfer><feMerge><feMergeNode/><feMergeNode in="SourceGraphic"/></feMerge></filter></defs>
<rect x="708.6" y="109.5" width="300.65" height="616.6" rx="36" ry="36" fill="none" stroke="#ec1c24" stroke-width="5"/>
<path d="M296.6 178.3 L692 175.6" stroke="#ec1c24" stroke-width="4.8" stroke-linecap="round" fill="none"/>
<path d="M697.8 175.5 L683 166.9 Q681.3 166.2 680.6 167.6 Q680.2 169.2 681.4 170 L689.5 175.5 L681.4 181 Q680.2 181.8 680.6 183.4 Q681.3 184.8 683 184.1 Z" fill="#ec1c24" stroke="#ec1c24" stroke-width="0.9" stroke-linejoin="round"/>
<g filter="url(#sh)" fill="#ec1c24">
<path d="M262.4 176.5 C253 172 244 162 231.5 160.8 A16.2 16.2 0 1 0 231.5 193.2 C244 192 253 181 262.4 176.5 Z"/>
<path d="M803.7 688 C813 683.5 822 673 835 671.8 A16.2 16.2 0 1 1 835 704.2 C822 703 813 692.5 803.7 688 Z"/>
</g>
</svg>
<div class="a" style="left:228.6px;top:168.04px;font-size:18.5px;line-height:18.5px;color:#fff;">2</div>
<div class="a" style="left:827.9px;top:678.94px;font-size:18.5px;line-height:18.5px;color:#fff;">3</div>
<div class="b" style="left:0;top:0;width:1020px;height:2px;background:#3a3a3a"></div>
<div class="b" style="left:0;top:0;width:2px;height:737px;background:#3a3a3a"></div>
<div class="b" style="left:1018px;top:0;width:2px;height:737px;background:#3a3a3a"></div>
<div class="b" style="left:0;top:735px;width:1020px;height:2px;background:#3a3a3a"></div>
</div></body></html>
